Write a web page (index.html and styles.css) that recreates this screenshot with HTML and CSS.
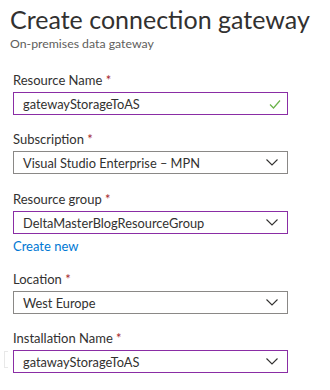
FILE: index.html
```html
<!DOCTYPE html>
<html>
<head>
<meta charset="utf-8">
<title>Create connection gateway</title>
<link rel="stylesheet" href="styles.css">
</head>
<body>
<div class="header">
  <h1 class="title">Create connection gateway</h1>
  <div class="subtitle">On-premises data gateway</div>
</div>

<form class="form">
  <div class="field">
    <label class="label">Resource Name <span class="req">*</span></label>
    <div class="box box-focus">
      <span class="value">gatewayStorageToAS</span>
      <svg class="check" width="12" height="10" viewBox="0 0 12 10"><path d="M1 5.5 L4.5 9 L11 1.5" fill="none" stroke="#6bb34a" stroke-width="1.2"/></svg>
    </div>
  </div>

  <div class="field">
    <label class="label">Subscription <span class="req">*</span></label>
    <div class="box">
      <span class="value">Visual Studio Enterprise – MPN</span>
      <svg class="chev" width="12" height="7" viewBox="0 0 12 7"><path d="M0.5 0.5 L6 6 L11.5 0.5" fill="none" stroke="#323130" stroke-width="1.1"/></svg>
    </div>
  </div>

  <div class="field">
    <label class="label">Resource group <span class="req">*</span></label>
    <div class="box box-focus">
      <span class="value">DeltaMasterBlogResourceGroup</span>
      <svg class="chev" width="12" height="7" viewBox="0 0 12 7"><path d="M0.5 0.5 L6 6 L11.5 0.5" fill="none" stroke="#323130" stroke-width="1.1"/></svg>
    </div>
    <a class="link" href="#">Create new</a>
  </div>

  <div class="field">
    <label class="label">Location <span class="req">*</span></label>
    <div class="box">
      <span class="value">West Europe</span>
      <svg class="chev" width="12" height="7" viewBox="0 0 12 7"><path d="M0.5 0.5 L6 6 L11.5 0.5" fill="none" stroke="#323130" stroke-width="1.1"/></svg>
    </div>
  </div>

  <div class="field">
    <label class="label">Installation Name <span class="req">*</span></label>
    <div class="box box-focus">
      <span class="caret"></span>
      <span class="value">gatawayStorageToAS</span>
      <svg class="chev" width="12" height="7" viewBox="0 0 12 7"><path d="M0.5 0.5 L6 6 L11.5 0.5" fill="none" stroke="#323130" stroke-width="1.1"/></svg>
    </div>
  </div>
</form>
</body>
</html>
```

FILE: styles.css
```css
body {margin:0; background:#ffffff; font-family:"Lato", "Open Sans", sans-serif; color:#323130;}

.header {padding:3px 10px 0 10px;}
.title {margin:0; font-size:25px; font-weight:400; line-height:33px; white-space:nowrap; color:#323130;}
.subtitle {font-size:12.3px; line-height:15px; color:#605e5c;}

.form {padding:0 42px 0 13px;}
.field {margin-top:15px;}
.field:first-child {margin-top:20px;}
.field:nth-child(3) {margin-top:16px;}
.label {display:block; font-size:13px; line-height:19px; margin-bottom:2px; color:#323130;}
.req {color:#a4262c;}

.box {position:relative; height:23px; box-sizing:border-box; border:1px solid #8a8886; display:flex; align-items:center; justify-content:space-between; padding:0 8px 0 9px; font-size:12.8px;}
.box-focus {border-color:#8a2da5;}
.value {white-space:nowrap; color:#323130;}
.check {margin-right:-2px;}
.chev {margin-right:1px;}

.caret {position:absolute; left:-10px; top:0; width:3px; height:15px; border:1px solid #e8e8e8; border-right:none;}

.link {display:block; font-size:13px; line-height:18px; margin-top:3px; color:#0078d4; text-decoration:none;}
.field:nth-child(4) {margin-top:15px;}
```
